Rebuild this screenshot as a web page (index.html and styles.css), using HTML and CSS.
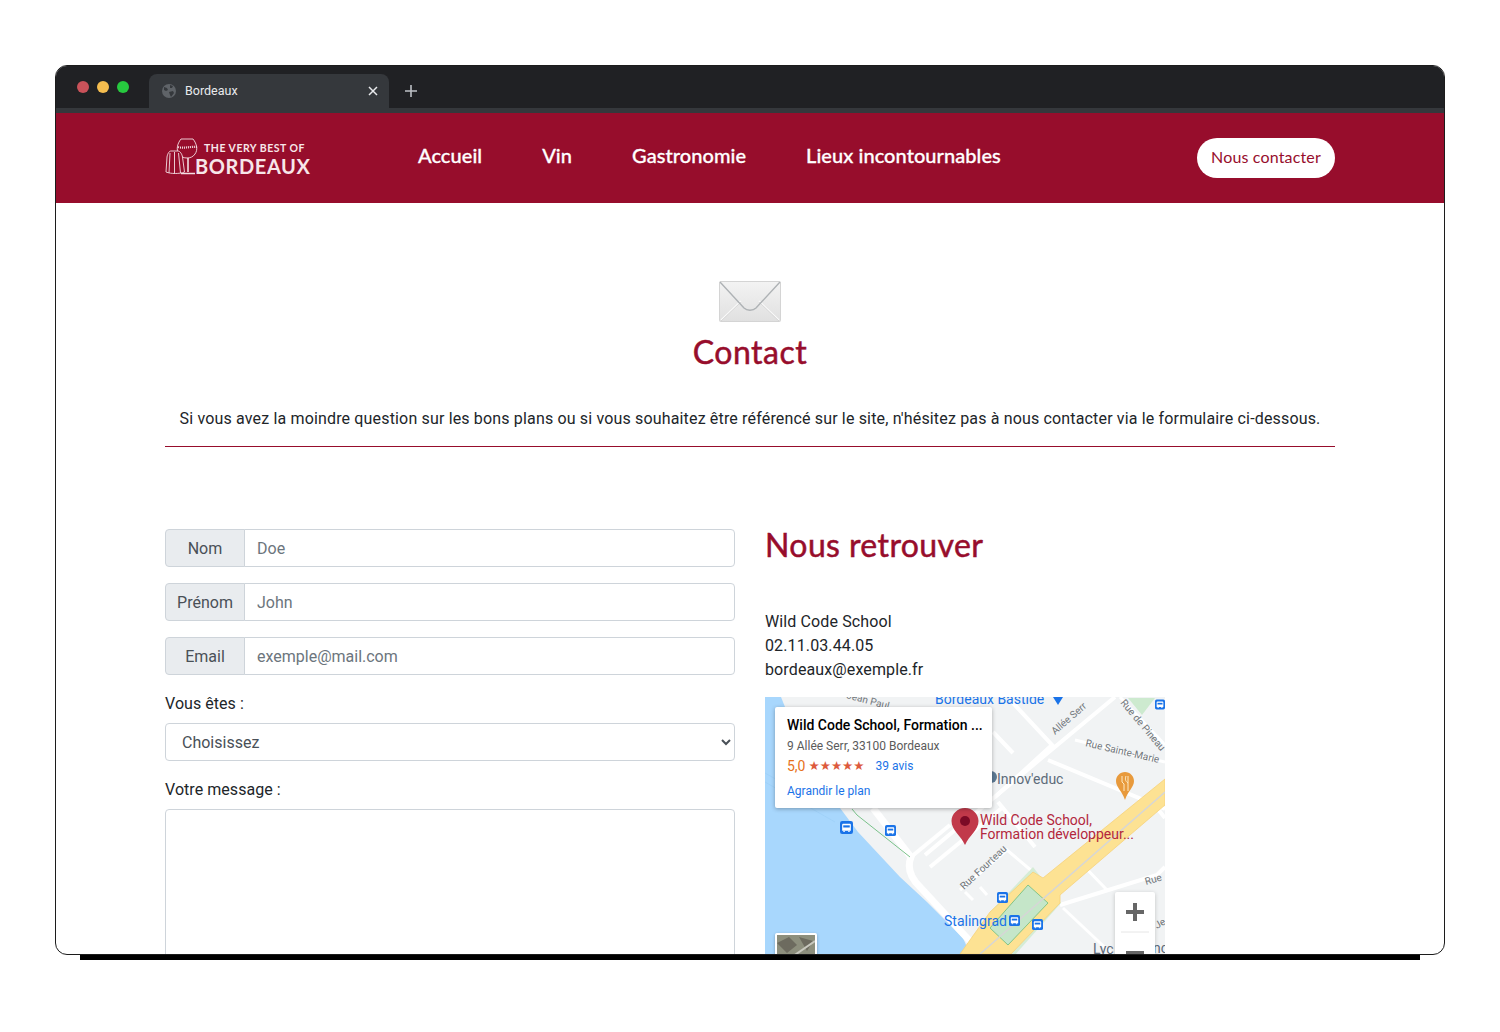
FILE: index.html
```html
<!DOCTYPE html>
<html lang="fr">

<head>
    <meta charset="UTF-8">
    <title>Bordeaux</title>
    <link rel="stylesheet" href="styles.css">
</head>

<body>
    <div class="window">
        <!-- Browser bar -->
        <div class="tabbar">
            <div class="dots">
                <span class="dot dot-red"></span>
                <span class="dot dot-yellow"></span>
                <span class="dot dot-green"></span>
            </div>
            <div class="tab">
                <svg class="tab-globe" width="14" height="14" viewBox="0 0 14 14">
                    <circle cx="7" cy="7" r="7" fill="#5f6368" />
                    <path d="M2 3l3 1 1 2-2 1-2-1zM8 1l3 1-1 2-2 0zM7 8l4-1 1 2-3 4-1-2z" fill="#35383c" />
                </svg>
                <span class="tab-title">Bordeaux</span>
                <svg class="tab-close" width="10" height="10" viewBox="0 0 10 10">
                    <path d="M1 1l8 8M9 1l-8 8" stroke="#e8eaed" stroke-width="1.5" />
                </svg>
            </div>
            <svg class="tab-plus" width="14" height="14" viewBox="0 0 14 14">
                <path d="M7 1v12M1 7h12" stroke="#bdc1c6" stroke-width="1.6" />
            </svg>
        </div>

        <!-- Site header -->
        <header class="site-header">
            <div class="container header-row">
                <a class="logo">
                    <svg class="logo-icon" width="36" height="38" viewBox="0 0 36 38" fill="none" stroke="#f4dfe3" stroke-width="0.9">
                        <!-- glass -->
                        <path d="M16 1h12c4 5 5 11 2 15-2 3-5 4-8 4s-6-1-8-4c-3-4-2-10 2-15z" />
                        <path d="M13 9c6 2 12-1 20 0" stroke-width="2.2" stroke-dasharray="1 1" />
                        <path d="M23 20v14M16 35.500h14" stroke-width="1.6" />
                        <!-- cake -->
                        <path d="M1 34l1-15c.5-3 2-6 4-6h7c2 0 4 3 4.500 6l2 15c-5 2-13.500 2-18.500 0z" fill="#970d2c" />
                        <path d="M5 15l-1 20M9.500 14v21.500M13.500 15l2 20" />
                    </svg>
                    <span class="logo-text">
                        <span class="logo-small">THE VERY BEST OF</span>
                        <span class="logo-big">BORDEAUX</span>
                    </span>
                </a>
                <nav class="nav">
                    <a>Accueil</a>
                    <a>Vin</a>
                    <a>Gastronomie</a>
                    <a>Lieux incontournables</a>
                </nav>
                <a class="btn-contact">Nous contacter</a>
            </div>
        </header>

        <main class="container">
            <section class="intro">
                <svg class="envelope" width="62" height="41" viewBox="0 0 62 41">
                    <defs>
                        <linearGradient id="envBg" x1="0" y1="0" x2="0" y2="1">
                            <stop offset="0" stop-color="#f3f3f3" />
                            <stop offset="1" stop-color="#e0e0e0" />
                        </linearGradient>
                    </defs>
                    <rect x="0.5" y="0.5" width="61" height="40" rx="1" fill="url(#envBg)" stroke="#d4d4d4" />
                    <path d="M2 39l20-19M60 39L40 20" stroke="#fafafa" stroke-width="1.4" fill="none" />
                    <path d="M2 40l20-19M60 40L40 21" stroke="#c8c8c8" stroke-width="0.6" fill="none" />
                    <path d="M1 1l24 26c3 3 9 3 12 0L61 1" stroke="#aeb2b5" stroke-width="1.4" fill="none" />
                </svg>
                <h1>Contact</h1>
                <p>Si vous avez la moindre question sur les bons plans ou si vous souhaitez être référencé sur le site, n'hésitez pas à nous contacter via le formulaire ci-dessous.</p>
            </section>

            <div class="columns">
                <form class="contact-form">
                    <div class="input-group">
                        <label class="input-label" for="nom">Nom</label>
                        <input type="text" id="nom" placeholder="Doe" />
                    </div>
                    <div class="input-group">
                        <label class="input-label" for="prenom">Prénom</label>
                        <input type="text" id="prenom" placeholder="John" />
                    </div>
                    <div class="input-group">
                        <label class="input-label" for="email">Email</label>
                        <input type="text" id="email" placeholder="exemple@mail.com" />
                    </div>
                    <label class="field-label" for="statut">Vous êtes :</label>
                    <select id="statut" class="field-select">
                        <option>Choisissez</option>
                    </select>
                    <label class="field-label" for="message">Votre message :</label>
                    <textarea id="message" class="field-message"></textarea>
                </form>

                <section class="find-us">
                    <h2>Nous retrouver</h2>
                    <address>
                        Wild Code School<br>
                        02.11.03.44.05<br>
                        bordeaux@exemple.fr
                    </address>

                    <!-- Map -->
                    <div class="map">
                        <svg class="map-bg" width="400" height="300" viewBox="0 0 400 300">
                            <defs>
                                <symbol id="bus" viewBox="0 0 12 12">
                                    <rect width="12" height="12" rx="2" fill="#1a73e8" />
                                    <path d="M3 2.500h6c.5 0 1 .5 1 1v5.500h-8v-5.500c0-.5.5-1 1-1z" fill="#fff" />
                                    <rect x="3" y="4" width="6" height="2" fill="#1a73e8" />
                                    <rect x="3" y="9" width="1.500" height="1" fill="#fff" />
                                    <rect x="7.500" y="9" width="1.500" height="1" fill="#fff" />
                                </symbol>
                            </defs>
                            <rect width="400" height="300" fill="#f1f3f4" />
                            <!-- water -->
                            <path d="M0 0H16L40 60 75 111 93 135 135 180 162 205 198 241 205 257V300H0z" fill="#a8d7fd" />
                            <path d="M0 76L60 110M0 85L70 125" stroke="#98cdf5" stroke-width="0.5" fill="none" />
                            <path d="M363 1H390L377 18z" fill="#cdeacf" />
                            <!-- roads -->
                            <g stroke="#fff" stroke-width="4" fill="none">
                                <path d="M108 111L146 160Q140 175 155 190L215 255" stroke-width="7" />
                                <path d="M146 160L185 128" />
                                <path d="M165 170L238 110" />
                                <path d="M195 193L242 153 268 175" stroke-width="3" />
                                <path d="M350 0L160 158" />
                                <path d="M247 5L287 48 230 100" />
                                <path d="M228 35L248 56" />
                                <path d="M310 43L400 65" stroke-width="3" />
                                <path d="M283 63L400 112" />
                                <path d="M233 105L270 150" />
                                <path d="M295 208L392 178 400 170" />
                                <path d="M298 211L348 258" stroke-width="3" />
                                <path d="M315 165L342 193" stroke-width="3" />
                                <path d="M392 111L400 121" />
                                <path d="M355 0L400 48" stroke-width="3" />
                                <path d="M200 195L208 203M215 190L222 198" stroke-width="3" />
                            </g>
                            <!-- highway and park -->
                            <path d="M225 215L268 170 296 206 250 258 225 250z" fill="#d5ecd6" />
                            <path d="M400 82L278 181 268 175 225 215 195 257H246L295 206 295 198 400 108z" fill="#fde293" stroke="#f6d27a" stroke-width="0.8" />
                            <path d="M263 188L283 206 243 248 225 231z" fill="#c5e6c9" stroke="#6cbc7c" stroke-width="0.8" />
                            <path d="M400 95L215 257" stroke="#d6d6d6" stroke-width="1.500" />
                            <path d="M87 112L92 118 145 160" stroke="#7ac28a" stroke-width="1" fill="none" />
                            <!-- street names -->
                            <g class="map-street">
                                <text transform="translate(81 1) rotate(15)">Jean Paul</text>
                                <text transform="translate(290 38) rotate(-41)">Allée Serr</text>
                                <text transform="translate(355 6) rotate(50)">Rue de Pineau</text>
                                <text transform="translate(320 49) rotate(13)">Rue Sainte-Marie</text>
                                <text transform="translate(199 193) rotate(-43)">Rue Fourteau</text>
                                <text transform="translate(381 188) rotate(-16)">Rue</text>
                                <text transform="translate(392 232) rotate(-30)">Je</text>
                            </g>
                            <circle cx="226" cy="80" r="6" fill="#5d7a94" />
                            <text class="map-place" x="232" y="87">Innov'educ</text>
                            <text class="map-place" x="328" y="257">Lyc</text>
                            <text class="map-place" x="388" y="256">nc</text>
                            <text class="map-transit" x="170" y="7">Bordeaux Bastide</text>
                            <path d="M288 0h10l-5 8z" fill="#1a73e8" />
                            <text class="map-transit" x="179" y="229">Stalingrad</text>
                            <!-- transit stops -->
                            <use href="#bus" x="75" y="124" width="13" height="13" />
                            <use href="#bus" x="120" y="128" width="11" height="11" />
                            <use href="#bus" x="232" y="195" width="11" height="11" />
                            <use href="#bus" x="267" y="222" width="11" height="11" />
                            <use href="#bus" x="244" y="218" width="11" height="11" />
                            <use href="#bus" x="390" y="2" width="10" height="11" />
                            <!-- restaurant pin -->
                            <path d="M360 75c5 0 9 4 9 9 0 6-6 10-9 19-3-9-9-13-9-19 0-5 4-9 9-9z" fill="#e89a3c" />
                            <path d="M357 79v6l2 2v7M363 79v15M361 79c-1 3-1 5 2 7" stroke="#fde9c3" stroke-width="1" fill="none" />
                            <!-- school pin -->
                            <path d="M200 111c7.500 0 13.500 6 13.500 13 0 9-9 14-13.500 24-4.500-10-13.500-15-13.500-24 0-7 6-13 13.500-13z" fill="#c1394a" />
                            <circle cx="200" cy="124" r="5" fill="#7c0a26" />
                            <text class="map-school" x="215" y="128">Wild Code School,</text>
                            <text class="map-school" x="215" y="142">Formation développeur...</text>
                        </svg>

                        <div class="map-card">
                            <div class="map-card-title">Wild Code School, Formation ...</div>
                            <div class="map-card-address">9 Allée Serr, 33100 Bordeaux</div>
                            <div class="map-card-rating">
                                <span class="rating-value">5,0</span>
                                <span class="rating-stars">★★★★★</span>
                                <span class="rating-count">39 avis</span>
                            </div>
                            <div class="map-card-link">Agrandir le plan</div>
                        </div>

                        <div class="map-zoom">
                            <svg width="40" height="80" viewBox="0 0 40 80">
                                <path d="M20 11v18M11 20h18" stroke="#666" stroke-width="4" />
                                <path d="M6 40h28" stroke="#e6e6e6" />
                                <path d="M11 61h18" stroke="#666" stroke-width="4" />
                            </svg>
                        </div>

                        <div class="map-thumb">
                            <svg width="38" height="40" viewBox="0 0 38 40">
                                <rect width="38" height="40" fill="#8d8f7d" />
                                <path d="M0 8l12-6 8 8-10 8zM22 2l14 4-6 10zM4 22l10 2-4 10z" fill="#6d6b5f" />
                                <path d="M12 24L38 6" stroke="#c9c9bf" stroke-width="2" />
                            </svg>
                        </div>
                    </div>
                </section>
            </div>
        </main>
    </div>
</body>

</html>
```

FILE: styles.css
```css
html,
body {
    height: 100%;
    margin: 0;
    overflow: hidden;
}

body {
    background-color: #fff;
    padding: 65px 55px 0;
    box-sizing: border-box;
    font-family: Roboto, "Liberation Sans", sans-serif;
    font-size: 16px;
    color: #212529;
}

.window {
    width: 1390px;
    height: 890px;
    box-sizing: border-box;
    background-color: #fff;
    border: 1px solid #1c1c1c;
    border-radius: 12px;
    overflow: hidden;
    box-shadow: 0 30px 0 -25px #000;
}

/* Browser bar */
.tabbar {
    display: flex;
    align-items: flex-end;
    height: 47px;
    background-color: #202124;
    box-shadow: inset 0 -5px 0 #35383c;
}

.dots {
    display: flex;
    gap: 8px;
    align-self: flex-start;
    padding: 15px 0 0 21px;
    width: 72px;
}

.dot {
    width: 12px;
    height: 12px;
    border-radius: 50%;
}

.dot-red {
    background-color: #c9525a;
}

.dot-yellow {
    background-color: #f5bd4f;
}

.dot-green {
    background-color: #27c93f;
}

.tab {
    display: flex;
    align-items: center;
    width: 240px;
    height: 39px;
    padding: 0 11px 6px 13px;
    box-sizing: border-box;
    background-color: #35383c;
    border-radius: 8px 8px 0 0;
}

.tab-title {
    flex: 1;
    margin-left: 9px;
    font-size: 12.500px;
    color: #e8eaed;
}

.tab-plus {
    align-self: flex-start;
    margin: 18px 0 0 15px;
}

/* Site header */
.container {
    width: 1170px;
    margin: 0 auto;
}

.site-header {
    height: 90px;
    background-color: #970d2c;
}

.header-row {
    display: flex;
    align-items: center;
    height: 100%;
}

.logo {
    display: flex;
    align-items: flex-end;
    width: 253px;
    height: 40px;
    margin-top: -3px;
}

.logo-icon {
    flex: none;
    margin-right: -6px;
    margin-bottom: 1px;
}

.logo-text {
    display: flex;
    flex-direction: column;
    margin-bottom: -1px;
    color: #f7e6e9;
    font-family: Lato, sans-serif;
}

.logo-small {
    margin-left: 9px;
    font-size: 10.500px;
    font-weight: 700;
    letter-spacing: 0.5px;
    line-height: 14px;
}

.logo-big {
    font-size: 20px;
    font-weight: 700;
    letter-spacing: 0.6px;
    line-height: 23px;
}

.nav {
    display: flex;
    gap: 60px;
    flex: 1;
    margin-top: -6px;
}

.nav a {
    font-family: Lato, sans-serif;
    font-size: 20px;
    font-weight: 500;
    letter-spacing: 0.06px;
    -webkit-text-stroke: 0.3px #fff;
    color: #fff;
}

.btn-contact {
    display: flex;
    align-items: center;
    justify-content: center;
    width: 138px;
    height: 40px;
    padding-bottom: 2px;
    box-sizing: border-box;
    border-radius: 20px;
    background-color: #fff;
    color: #970d2c;
    font-family: Lato, sans-serif;
    font-size: 16px;
    letter-spacing: 0.15px;
    margin-top: -1px;
}

/* Intro */
.intro {
    height: 244px;
    box-sizing: border-box;
    padding-top: 78px;
    text-align: center;
    border-bottom: 1px solid #970d2c;
}

.envelope {
    display: block;
    margin: 0 auto;
}

h1 {
    margin: 11px 0 36px;
    font-family: Lato, sans-serif;
    font-size: 32px;
    font-weight: 400;
    -webkit-text-stroke: 0.5px #970d2c;
    line-height: 38px;
    letter-spacing: 0.5px;
    color: #970d2c;
}

.intro p {
    margin: 0;
    line-height: 24px;
    letter-spacing: 0.16px;
}

/* Columns */
.columns {
    display: flex;
    gap: 30px;
    padding-top: 82px;
}

.contact-form {
    width: 570px;
    flex: none;
}

.input-group {
    display: flex;
    height: 38px;
    margin-bottom: 16px;
}

.input-label {
    width: 80px;
    box-sizing: border-box;
    display: flex;
    align-items: center;
    justify-content: center;
    background-color: #e9ecef;
    border: 1px solid #ced4da;
    border-radius: 4px 0 0 4px;
    color: #495057;
}

.input-group input {
    flex: 1;
    min-width: 0;
    margin-left: -1px;
    padding: 6px 12px;
    border: 1px solid #ced4da;
    border-radius: 0 4px 4px 0;
    font-family: inherit;
    font-size: 16px;
    color: #495057;
}

.input-group input::placeholder {
    color: #6c757d;
    opacity: 1;
}

.field-label {
    display: block;
    margin-bottom: 7px;
    padding-top: 1px;
    line-height: 24px;
    letter-spacing: 0.05px;
}

.field-select {
    display: block;
    width: 100%;
    height: 38px;
    margin-bottom: 16px;
    padding: 6px 12px;
    background-color: #fff;
    border: 1px solid #ced4da;
    border-radius: 4px;
    font-family: inherit;
    font-size: 16px;
    color: #495057;
}

.field-message {
    display: block;
    width: 100%;
    height: 200px;
    box-sizing: border-box;
    border: 1px solid #ced4da;
    border-radius: 4px;
    resize: none;
}

/* Right column */
.find-us {
    flex: 1;
}

h2 {
    margin: -4px 0 45px;
    font-family: Lato, sans-serif;
    font-size: 32px;
    font-weight: 400;
    -webkit-text-stroke: 0.5px #970d2c;
    line-height: 40px;
    letter-spacing: 0.4px;
    color: #970d2c;
}

address {
    font-style: normal;
    line-height: 24px;
    margin-bottom: 15px;
    letter-spacing: 0.12px;
}

/* Map */
.map {
    position: relative;
    width: 400px;
    height: 300px;
    overflow: hidden;
}

.map-bg {
    display: block;
}

.map-street {
    font-size: 10px;
    fill: #70757a;
}

.map-place {
    font-size: 14px;
    fill: #5d6b7a;
}

.map-transit {
    font-size: 14px;
    fill: #1a73e8;
}

.map-school {
    font-size: 14px;
    fill: #b3273d;
}

.map-card {
    position: absolute;
    left: 10px;
    top: 10px;
    width: 217px;
    height: 101px;
    box-sizing: border-box;
    padding: 10px 0 0 12px;
    background-color: #fff;
    border-radius: 2px;
    box-shadow: 0 1px 4px rgba(0, 0, 0, 0.3);
    font-size: 12px;
    color: #5b5b5b;
}

.map-card-title {
    font-size: 14px;
    font-weight: 500;
    line-height: 16px;
    color: #000;
}

.map-card-address {
    margin-top: 5px;
    line-height: 16px;
}

.map-card-rating {
    display: flex;
    align-items: center;
    margin-top: 3px;
    line-height: 18px;
}

.rating-value {
    font-size: 14px;
    color: #e7711b;
}

.rating-stars {
    margin-left: 3px;
    font-family: "DejaVu Sans", sans-serif;
    font-size: 12.500px;
    color: #dd5a3c;
}

.rating-count {
    margin-left: 11px;
    font-size: 12px;
    color: #1a73e8;
}

.map-card-link {
    margin-top: 8px;
    color: #1a73e8;
    line-height: 16px;
}

.map-zoom {
    position: absolute;
    left: 350px;
    top: 195px;
    width: 40px;
    height: 80px;
    background-color: #fff;
    border-radius: 2px;
    box-shadow: 0 1px 4px rgba(0, 0, 0, 0.2);
}

.map-zoom svg {
    display: block;
}

.map-thumb {
    position: absolute;
    left: 10px;
    top: 236px;
    width: 38px;
    height: 40px;
    border: 2px solid #fff;
    border-radius: 2px;
    box-shadow: 0 1px 3px rgba(0, 0, 0, 0.3);
}

.map-thumb svg {
    display: block;
}
```
